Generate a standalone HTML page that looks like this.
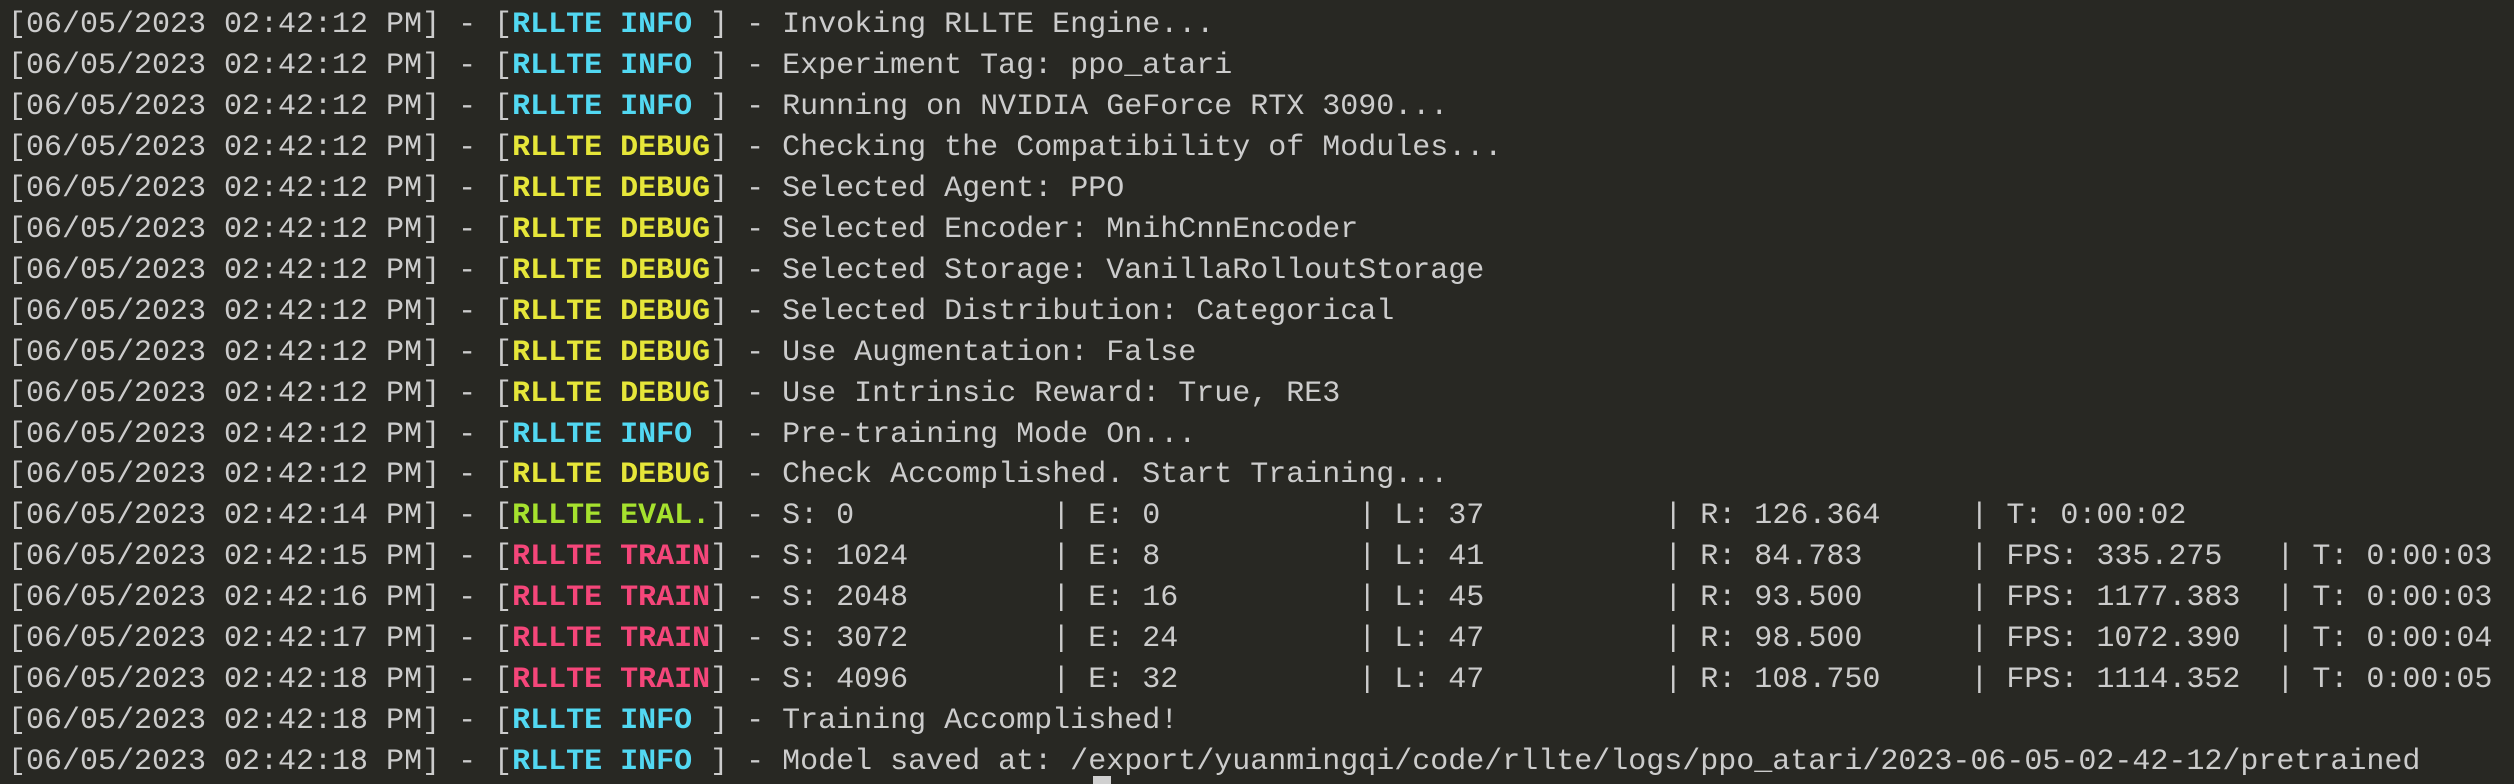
<!DOCTYPE html>
<html><head><meta charset="utf-8"><style>
html,body{margin:0;padding:0;background:#282823;width:2514px;height:784px;overflow:hidden}
pre{margin:0;position:absolute;left:8px;top:5px;font-family:"Liberation Mono",monospace;font-size:30px;line-height:40.95px;color:#cccccc;white-space:pre}
.c{color:#52d8f2;font-weight:bold}
.y{color:#e6e639;font-weight:bold}
.g{color:#a6e22e;font-weight:bold}
.p{color:#f5467a;font-weight:bold}
.cur{position:absolute;left:1093px;top:776px;width:18px;height:8px;background:#d0d0d0}
</style></head><body>
<pre>[06/05/2023 02:42:12 PM] - [<span class="c">RLLTE INFO</span> ] - Invoking RLLTE Engine...
[06/05/2023 02:42:12 PM] - [<span class="c">RLLTE INFO</span> ] - Experiment Tag: ppo_atari
[06/05/2023 02:42:12 PM] - [<span class="c">RLLTE INFO</span> ] - Running on NVIDIA GeForce RTX 3090...
[06/05/2023 02:42:12 PM] - [<span class="y">RLLTE DEBUG</span>] - Checking the Compatibility of Modules...
[06/05/2023 02:42:12 PM] - [<span class="y">RLLTE DEBUG</span>] - Selected Agent: PPO
[06/05/2023 02:42:12 PM] - [<span class="y">RLLTE DEBUG</span>] - Selected Encoder: MnihCnnEncoder
[06/05/2023 02:42:12 PM] - [<span class="y">RLLTE DEBUG</span>] - Selected Storage: VanillaRolloutStorage
[06/05/2023 02:42:12 PM] - [<span class="y">RLLTE DEBUG</span>] - Selected Distribution: Categorical
[06/05/2023 02:42:12 PM] - [<span class="y">RLLTE DEBUG</span>] - Use Augmentation: False
[06/05/2023 02:42:12 PM] - [<span class="y">RLLTE DEBUG</span>] - Use Intrinsic Reward: True, RE3
[06/05/2023 02:42:12 PM] - [<span class="c">RLLTE INFO</span> ] - Pre-training Mode On...
[06/05/2023 02:42:12 PM] - [<span class="y">RLLTE DEBUG</span>] - Check Accomplished. Start Training...
[06/05/2023 02:42:14 PM] - [<span class="g">RLLTE EVAL.</span>] - S: 0           | E: 0           | L: 37          | R: 126.364     | T: 0:00:02
[06/05/2023 02:42:15 PM] - [<span class="p">RLLTE TRAIN</span>] - S: 1024        | E: 8           | L: 41          | R: 84.783      | FPS: 335.275   | T: 0:00:03
[06/05/2023 02:42:16 PM] - [<span class="p">RLLTE TRAIN</span>] - S: 2048        | E: 16          | L: 45          | R: 93.500      | FPS: 1177.383  | T: 0:00:03
[06/05/2023 02:42:17 PM] - [<span class="p">RLLTE TRAIN</span>] - S: 3072        | E: 24          | L: 47          | R: 98.500      | FPS: 1072.390  | T: 0:00:04
[06/05/2023 02:42:18 PM] - [<span class="p">RLLTE TRAIN</span>] - S: 4096        | E: 32          | L: 47          | R: 108.750     | FPS: 1114.352  | T: 0:00:05
[06/05/2023 02:42:18 PM] - [<span class="c">RLLTE INFO</span> ] - Training Accomplished!
[06/05/2023 02:42:18 PM] - [<span class="c">RLLTE INFO</span> ] - Model saved at: /export/yuanmingqi/code/rllte/logs/ppo_atari/2023-06-05-02-42-12/pretrained</pre>
<div class="cur"></div>
</body></html>
